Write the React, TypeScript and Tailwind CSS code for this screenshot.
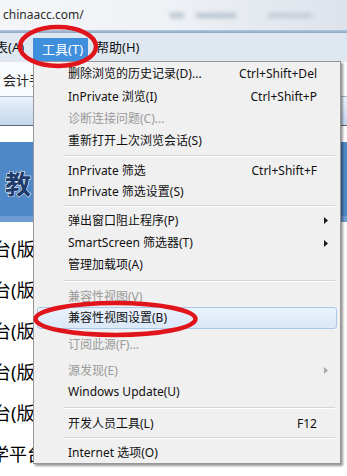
type Row =
  | {
      kind: "item";
      label: string;
      keys?: string;
      h: string;
      gray?: boolean;
      arrow?: boolean;
      active?: boolean;
    }
  | { kind: "sep"; h: string };

const rows: Row[] = [
  { kind: "item", label: "删除浏览的历史记录(D)...", keys: "Ctrl+Shift+Del", h: "h-[23px]" },
  { kind: "item", label: "InPrivate 浏览(I)", keys: "Ctrl+Shift+P", h: "h-[23px]" },
  { kind: "item", label: "诊断连接问题(C)...", gray: true, h: "h-[22px]" },
  { kind: "item", label: "重新打开上次浏览会话(S)", h: "h-[22px]" },
  { kind: "sep", h: "h-[8px]" },
  { kind: "item", label: "InPrivate 筛选", keys: "Ctrl+Shift+F", h: "h-[21px]" },
  { kind: "item", label: "InPrivate 筛选设置(S)", h: "h-[21px]" },
  { kind: "sep", h: "h-[8px]" },
  { kind: "item", label: "弹出窗口阻止程序(P)", arrow: true, h: "h-[21px]" },
  { kind: "item", label: "SmartScreen 筛选器(T)", arrow: true, h: "h-[24px]" },
  { kind: "item", label: "管理加载项(A)", h: "h-[20px]" },
  { kind: "sep", h: "h-[12px]" },
  { kind: "item", label: "兼容性视图(V)", gray: true, h: "h-[19px]" },
  { kind: "item", label: "兼容性视图设置(B)", active: true, h: "h-[22px]" },
  { kind: "item", label: "订阅此源(F)...", gray: true, h: "h-[30px]" },
  { kind: "item", label: "源发现(E)", gray: true, arrow: true, h: "h-[21px]" },
  { kind: "item", label: "Windows Update(U)", h: "h-[22px]" },
  { kind: "sep", h: "h-[10px]" },
  { kind: "item", label: "开发人员工具(L)", keys: "F12", h: "h-[21px]" },
  { kind: "sep", h: "h-[8px]" },
  { kind: "item", label: "Internet 选项(O)", h: "h-[21px]" },
];

const pageRows = ["台(版", "台(版", "台(版", "台(版", "台(版"];

function Arrow({ gray }: { gray?: boolean }) {
  return (
    <svg width="4" height="7" viewBox="0 0 4 7" className="shrink-0">
      <path d="M0 0 L4 3.5 L0 7 Z" fill={gray ? "#a8a8a8" : "#1a1a1a"} />
    </svg>
  );
}

function ToolsMenu() {
  return (
    <div className="absolute left-[33px] top-[61px] w-[308px] border border-[#979797] bg-[#f0f0f0] shadow-[2px_2px_2px_rgba(0,0,0,0.4)] font-['Noto_Sans','Noto_Sans_CJK_SC',sans-serif] text-[12px]">
      {rows.map((row, i) => {
        if (row.kind === "sep") {
          return (
            <div key={i} className={`${row.h} flex items-center`}>
              <div className="ml-[30px] mr-[5px] h-[2px] flex-1 border-t border-[#d5d5d5] border-b border-b-white" />
            </div>
          );
        }
        if (row.active) {
          return (
            <div
              key={i}
              className={`${row.h} mx-[3px] my-[1px] flex items-center rounded-[3px] border border-[#a9c8ea] bg-gradient-to-b from-[#eaf2fc] to-[#dae8f8] pl-[30px] text-[#111]`}
            >
              {row.label}
            </div>
          );
        }
        return (
          <div
            key={i}
            className={`${row.h} flex items-center pl-[34px] pr-[12px] ${row.gray ? "text-[#9a9a9a]" : "text-[#111]"}`}
          >
            <span className="flex-1 whitespace-nowrap">{row.label}</span>
            {row.keys && <span className="mr-[11px] whitespace-nowrap">{row.keys}</span>}
            {row.arrow && <Arrow gray={row.gray} />}
          </div>
        );
      })}
    </div>
  );
}

export default function App() {
  return (
    <div className="relative h-[476px] w-[347px] overflow-hidden bg-white font-['Noto_Sans','Noto_Sans_CJK_SC',sans-serif]">
      {/* address bar */}
      <div className="flex h-[30px] items-center bg-gradient-to-r from-[#f5f6f8] via-[#eef1f5] to-[#dce3eb] pl-[3px]">
        <span className="text-[12px] text-[#2b2b2b]">chinaacc.com/</span>
        <div className="ml-[86px] flex gap-[12px] blur-[2px]">
          <div className="h-[5px] w-[14px] bg-[#b9c3cf]" />
          <div className="h-[5px] w-[40px] bg-[#b9c3cf]" />
          <div className="ml-[20px] h-[5px] w-[44px] bg-[#c3ccd7]" />
        </div>
      </div>
      <div className="h-[3px] bg-gradient-to-b from-[#b3c7de] to-[#8aa6c8]" />

      {/* menu bar */}
      <div className="flex h-[29px] items-center bg-[#dfe7f1] text-[13px] text-[#111]">
        <span className="-ml-[5px] w-[38px] whitespace-nowrap">表(A)</span>
        <span className="mt-[4px] flex h-[24px] w-[55px] items-center bg-[#3f8fdc] pl-[9px] text-white">
          工具(T)
        </span>
        <span className="ml-[8px]">帮助(H)</span>
      </div>

      {/* page */}
      <div className="flex h-[34px] items-end bg-[#f8fafc] pb-[6px] pl-[3px] text-[13px] text-[#222]">
        会计手
      </div>
      <div className="h-[1px] bg-[#a9b4c2]" />
      <div className="h-[28px] bg-gradient-to-b from-[#eaf1fa] to-[#c4d6ed]" />
      <div className="h-[1px] bg-[#5f6670]" />
      <div className="h-[16px] bg-white" />
      <div className="flex h-[80px] items-center border-b-[6px] border-[#6d9dd2] bg-[#4f88c6] pl-[5px] pt-[6px]">
        <span className="text-[26px] font-bold text-[#1d3b6d] [-webkit-text-stroke:1px_#ffffff] [paint-order:stroke_fill] font-['Noto_Sans_CJK_SC',sans-serif]">
          教
        </span>
      </div>
      <div className="flex flex-col pt-[7px] text-[18px] text-black">
        {pageRows.map((t, i) => (
          <div key={i} className="-ml-[7px] flex h-[41px] items-center whitespace-nowrap">
            {t}
          </div>
        ))}
        <div className="-ml-[9px] flex h-[41px] items-center whitespace-nowrap">学平台</div>
      </div>

      <ToolsMenu />

      {/* red annotation ellipses */}
      <svg className="pointer-events-none absolute left-0 top-0" width="347" height="476">
        <ellipse cx="58" cy="46.5" rx="38" ry="19.5" fill="none" stroke="#e0141b" strokeWidth="4.5" />
        <ellipse cx="115.5" cy="319" rx="80" ry="16" fill="none" stroke="#e0141b" strokeWidth="4.5" />
      </svg>
    </div>
  );
}
